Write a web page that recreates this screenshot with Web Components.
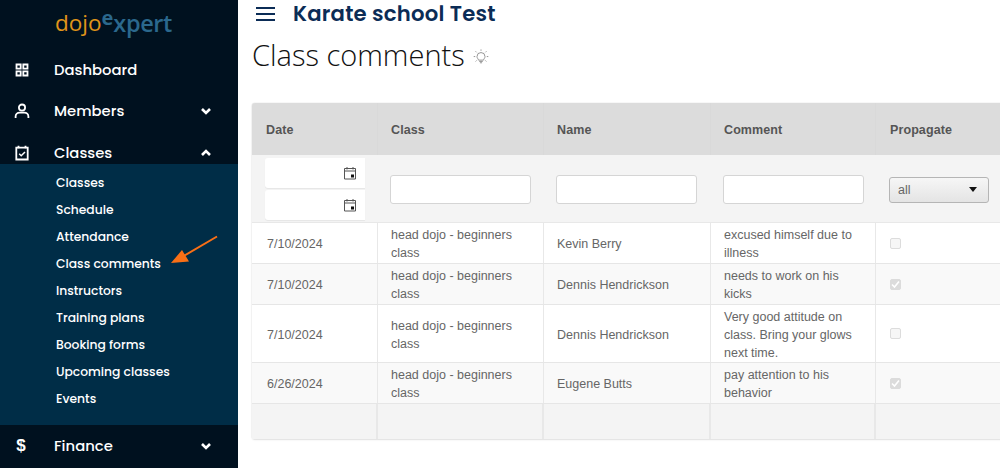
<!DOCTYPE html>
<html>
<head>
<meta charset="utf-8">
<title>Class comments</title>
<style>
html, body { margin: 0; padding: 0; }
body { width: 1000px; height: 468px; overflow: hidden; position: relative; display: flex; font-family: "Liberation Sans", sans-serif; background: #fff; }
</style>
</head>
<body>
<side-bar>
  <nav-item label="Dashboard" icon="grid"></nav-item>
  <nav-item label="Members" icon="user" caret="down"></nav-item>
  <nav-item label="Classes" icon="check" caret="up"></nav-item>
  <sub-menu>
    <sub-item>Classes</sub-item>
    <sub-item>Schedule</sub-item>
    <sub-item>Attendance</sub-item>
    <sub-item>Class comments</sub-item>
    <sub-item>Instructors</sub-item>
    <sub-item>Training plans</sub-item>
    <sub-item>Booking forms</sub-item>
    <sub-item>Upcoming classes</sub-item>
    <sub-item>Events</sub-item>
  </sub-menu>
  <nav-item label="Finance" icon="dollar" caret="down"></nav-item>
</side-bar>
<main-area>
  <top-bar>Karate school Test</top-bar>
  <page-title>Class comments</page-title>
  <comments-table>
    <comment-row date="7/10/2024" cls="head dojo - beginners class" name="Kevin Berry" h="40">excused himself due to illness</comment-row>
    <comment-row date="7/10/2024" cls="head dojo - beginners class" name="Dennis Hendrickson" h="40" checked alt>needs to work on his kicks</comment-row>
    <comment-row date="7/10/2024" cls="head dojo - beginners class" name="Dennis Hendrickson" h="57">Very good attitude on class. Bring your glows next time.</comment-row>
    <comment-row date="6/26/2024" cls="head dojo - beginners class" name="Eugene Butts" h="40" checked alt>pay attention to his behavior</comment-row>
  </comments-table>
</main-area>
<pointer-arrow></pointer-arrow>

<script>
(function () {
    const icons = {
        grid: '<path d="M2.500 2.500h4.200v4.200H2.500zM9.300 2.500h4.200v4.200H9.300zM2.500 9.300h4.200v4.200H2.500zM9.300 9.300h4.200v4.200H9.300z" fill="none" stroke="#fff" stroke-width="1.800"/>',
        user: '<circle cx="8" cy="4.600" r="3.100" fill="none" stroke="#fff" stroke-width="1.800"/><path d="M1.600 15v-1.400c0-2.400 1.900-4 4-4h4.800c2.100 0 4 1.600 4 4V15" fill="none" stroke="#fff" stroke-width="1.800"/>',
        check: '<path d="M2.300 2.700h11.400v11.800H2.300z" fill="none" stroke="#fff" stroke-width="1.800"/><path d="M4.500 .8v2.500M11.500 .8v2.500" stroke="#fff" stroke-width="1.800"/><path d="M5.200 8.800l2 2 3.800-3.800" fill="none" stroke="#fff" stroke-width="1.500"/>'
    };

    class SideBar extends HTMLElement {
        constructor() {
            super();
            this.attachShadow({ mode: "open" }).innerHTML = `
            <style>
            :host { display: block; flex: none; width: 238px; height: 468px; background: #00111f; overflow: hidden; font-family: "Poppins", "Inter", "Open Sans", sans-serif; }
            .logo { height: 49px; box-sizing: border-box; padding: 0 0 0 55px; white-space: nowrap; font-family: "Open Sans", sans-serif; font-size: 22.500px; line-height: 44px; }
            .a { color: #e0951a; }
            .b { color: #2b688d; font-weight: 600; font-size: 23.500px; position: relative; top: 1px; letter-spacing: -.4px; }
            .e { color: #2b688d; font-weight: 700; font-size: 20px; position: relative; top: -6px; }
            </style>
            <div class="logo"><span class="a">dojo</span><span class="e">e</span><span class="b">xpert</span></div>
            <slot></slot>`;
        }
    }
    customElements.define("side-bar", SideBar);

    class NavItem extends HTMLElement {
        constructor() {
            super();
            const root = this.attachShadow({ mode: "open" });
            const caret = this.getAttribute("caret");
            const icon = this.getAttribute("icon");
            const d = caret === "up" ? "M2 8l4-4 4 4" : "M2 4l4 4 4-4";
            root.innerHTML = `
            <style>
            :host { display: flex; align-items: center; height: 41.500px; padding-left: 14px; padding-right: 26px; color: #fff; font-size: 14.800px; font-weight: 500; }
            svg.i { width: 16px; height: 16px; flex: none; }
            .d { width: 16px; flex: none; text-align: center; font: 700 17px "Liberation Sans", sans-serif; margin-left: -1px; margin-right: 1px; }
            .t { margin-left: 24px; flex: 1; }
            svg.c { width: 12px; height: 12px; flex: none; }
            </style>
            ${icon === "dollar" ? '<span class="d">$</span>' : `<svg class="i" viewBox="0 0 16 16">${icons[icon]}</svg>`}
            <span class="t">${this.getAttribute("label")}</span>
            ${caret ? `<svg class="c" viewBox="0 0 12 12"><path d="${d}" fill="none" stroke="#fff" stroke-width="2.600"/></svg>` : ""}`;
        }
    }
    customElements.define("nav-item", NavItem);

    class SubMenu extends HTMLElement {
        constructor() {
            super();
            this.attachShadow({ mode: "open" }).innerHTML = `
            <style>
            :host { display: block; background: #002d47; margin-top: -9.500px; padding: 4.500px 0 13.500px; }
            </style>
            <slot></slot>`;
        }
    }
    customElements.define("sub-menu", SubMenu);

    class SubItem extends HTMLElement {
        constructor() {
            super();
            this.attachShadow({ mode: "open" }).innerHTML = `
            <style>
            :host { display: block; height: 27px; line-height: 27px; padding-left: 56px; color: #fff; font-size: 12.300px; font-weight: 500; }
            </style>
            <slot></slot>`;
        }
    }
    customElements.define("sub-item", SubItem);

    class MainArea extends HTMLElement {
        constructor() {
            super();
            this.attachShadow({ mode: "open" }).innerHTML = `
            <style>
            :host { display: block; flex: 1; min-width: 0; height: 468px; overflow: hidden; padding-left: 14px; }
            </style>
            <slot></slot>`;
        }
    }
    customElements.define("main-area", MainArea);

    class TopBar extends HTMLElement {
        constructor() {
            super();
            this.attachShadow({ mode: "open" }).innerHTML = `
            <style>
            :host { display: flex; align-items: center; height: 27px; padding-left: 4px; color: #0b2c56; font-family: "Poppins", "Inter", sans-serif; font-size: 21.200px; font-weight: 600; letter-spacing: .2px; }
            svg { width: 19px; height: 16px; margin-right: 18px; flex: none; margin-top: 1px; }
            </style>
            <svg viewBox="0 0 19 16"><path d="M0 2h19M0 8h19M0 14h19" stroke="#0b2c56" stroke-width="2"/></svg>
            <slot></slot>`;
        }
    }
    customElements.define("top-bar", TopBar);

    class PageTitle extends HTMLElement {
        constructor() {
            super();
            this.attachShadow({ mode: "open" }).innerHTML = `
            <style>
            :host { display: flex; align-items: center; height: 54px; color: #111; font-family: "Open Sans", sans-serif; font-size: 29px; font-weight: 300; margin-bottom: 22px; }
            svg { width: 16px; height: 16px; margin-left: 8px; margin-top: 6px; flex: none; }
            </style>
            <slot></slot>
            <svg viewBox="0 0 18 18" fill="none" stroke="#888" stroke-width="1">
              <path d="M6.200 12.500c-.2-1.500-1.700-2-1.700-4a4.500 4.500 0 0 1 9 0c0 2-1.500 2.500-1.700 4zM7 14h4M7.800 15.500h2.400"/>
              <path d="M9 .5v1.500M2.900 2.600l1.100 1.100M15.100 2.600L14 3.700M.8 8.500h1.700M15.500 8.500h1.700M3 14l1.100-1.100M15 14l-1.100-1.100"/>
            </svg>`;
        }
    }
    customElements.define("page-title", PageTitle);

    const COLS = "126px 166px 167px 165px 150px";

    class CommentsTable extends HTMLElement {
        constructor() {
            super();
            const cal = `<svg viewBox="0 0 14 14" fill="none" stroke="#555" stroke-width="1"><path d="M1.500 2.500h11v10.500h-11zM1.500 5h11M4 1v2.500M10 1v2.500"/><rect x="8" y="8.500" width="3" height="3" fill="#111" stroke="none"/></svg>`;
            this.attachShadow({ mode: "open" }).innerHTML = `
            <style>
            :host { display: block; width: 760px; box-shadow: 0 0 1px rgba(0,0,0,.3), 0 1px 2px rgba(0,0,0,.1); border-radius: 3px 0 0 3px; color: #555; font-size: 12.500px; }
            .row { display: grid; grid-template-columns: ${COLS}; }
            .head { height: 52px; background: #dcdcdc; align-items: stretch; font-weight: 700; letter-spacing: .1px; color: #555; border-radius: 3px 0 0 0; }
            .head div { padding: 2px 0 0 14px; display: flex; align-items: center; border-right: 1px solid #d9d9d9; box-sizing: border-box; }
            .head div + div { padding-left: 13px; }
            .head div:last-child { padding-left: 14px; border: 0; }
            .filters { height: 68px; background: #f4f4f4; border-bottom: 1px solid #e8e8e8; box-sizing: border-box; align-items: center; }
            .filters > div { padding-left: 12px; display: flex; }
            .filters > .dates { flex-direction: column; gap: 2px; padding-left: 13px; }
            .date { width: 100px; height: 30px; box-sizing: border-box; background: #fff; border-radius: 3px 0 0 3px; box-shadow: 0 1px 1px rgba(0,0,0,.06); display: flex; align-items: center; justify-content: flex-end; padding-right: 8px; }
            .date svg { width: 14px; height: 14px; }
            input { width: 141px; height: 29px; box-sizing: border-box; border: 1px solid #d5d5d5; border-radius: 3px; background: #fff; margin: 1px 0 0; padding: 0; }
            .sel { width: 100px; height: 26px; box-sizing: border-box; margin: 2px 0 0 1px; border: 1px solid #b5b5b5; border-radius: 3px; background: linear-gradient(#f6f6f6, #e4e4e4); display: flex; align-items: center; justify-content: space-between; padding: 0 11px 0 8px; color: #666; }
            .sel i { width: 0; height: 0; border: 4px solid transparent; border-top: 5px solid #111; border-bottom: 0; }
            .foot { height: 35px; background: #f4f4f4; }
            .foot div { border-right: 2px solid #e8e8e8; }
            </style>
            <div class="row head"><div>Date</div><div>Class</div><div>Name</div><div>Comment</div><div>Propagate</div></div>
            <div class="row filters">
              <div class="dates"><div class="date">${cal}</div><div class="date">${cal}</div></div>
              <div><input type="text"></div><div><input type="text"></div><div><input type="text"></div>
              <div><div class="sel">all<i></i></div></div>
            </div>
            <slot></slot>
            <div class="row foot"><div></div><div></div><div></div><div></div><div style="border:0"></div></div>`;
        }
    }
    customElements.define("comments-table", CommentsTable);

    class CommentRow extends HTMLElement {
        constructor() {
            super();
            const alt = this.hasAttribute("alt");
            const checked = this.hasAttribute("checked");
            this.attachShadow({ mode: "open" }).innerHTML = `
            <style>
            :host { display: grid; grid-template-columns: ${COLS}; height: ${+this.getAttribute("h") + 1}px; box-sizing: border-box; border-bottom: 1px solid #e6e6e6; background: ${alt ? "#f9f9f9" : "#fff"}; color: #666; font-size: 12.500px; line-height: 18px; }
            div { display: flex; align-items: center; padding: 2px 13px 0; box-sizing: border-box; border-right: 1.500px solid #e8e8e8; min-width: 0; }
            div:first-of-type { padding-left: 15px; }
            div:last-child { border: 0; padding-left: 14px; padding-top: 0; }
            i { width: 11px; height: 11px; box-sizing: border-box; border: 1px solid #dcdcdc; border-radius: 2px; background: ${checked ? "#dcdcdc" : "#f6f6f6"}; display: flex; }
            svg { width: 9px; height: 9px; }
            </style>
            <div>${this.getAttribute("date")}</div>
            <div>${this.getAttribute("cls")}</div>
            <div>${this.getAttribute("name")}</div>
            <div><span><slot></slot></span></div>
            <div><i>${checked ? '<svg viewBox="0 0 9 9"><path d="M1 4.500l2.500 2.500L8 1.500" fill="none" stroke="#fff" stroke-width="1.600"/></svg>' : ""}</i></div>`;
        }
    }
    customElements.define("comment-row", CommentRow);

    class PointerArrow extends HTMLElement {
        constructor() {
            super();
            this.attachShadow({ mode: "open" }).innerHTML = `
            <style>
            :host { position: absolute; left: 165px; top: 230px; width: 56px; height: 40px; }
            svg { display: block; }
            </style>
            <svg width="56" height="40" viewBox="0 0 56 40"><path d="M52 6.500L17 27" stroke="#f96f16" stroke-width="2"/><path d="M6 33l18-1.500-7-11.500z" fill="#f96f16"/></svg>`;
        }
    }
    customElements.define("pointer-arrow", PointerArrow);
})();
</script>
</body>
</html>
